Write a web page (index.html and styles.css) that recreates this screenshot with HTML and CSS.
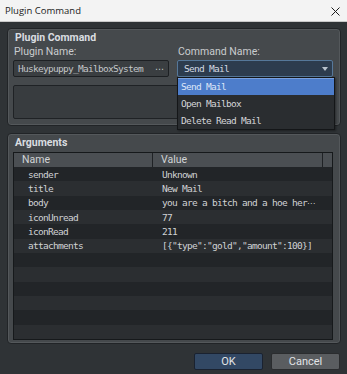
FILE: index.html
```html
<!DOCTYPE html>
<html>
<head>
  <title>Plugin Command</title>
  <link rel="stylesheet" href="styles.css">
</head>
<body>
  <div class="titlebar">
    <span class="title">Plugin Command</span>
    <svg class="close" width="9" height="9" viewBox="0 0 9 9">
      <path d="M0.5 0.5L8.5 8.5M8.5 0.5L0.5 8.5" stroke="#1b1b1b" stroke-width="1"/>
    </svg>
  </div>

  <div class="dialog">
    <div class="group command-group">
      <div class="group-title">Plugin Command</div>
      <div class="fields">
        <div class="field">
          <div class="label">Plugin Name:</div>
          <div class="input">
            <span class="mono">Huskeypuppy_MailboxSystem</span>
            <span class="more">⋯</span>
          </div>
        </div>
        <div class="field command-field">
          <div class="label">Command Name:</div>
          <div class="select">
            <span class="mono">Send Mail</span>
            <svg class="arrow" width="6" height="4" viewBox="0 0 6 4">
              <path d="M0 0H6L3 4Z" fill="#b9c2cc"/>
            </svg>
          </div>
          <ul class="dropdown mono">
            <li class="selected">Send Mail</li>
            <li>Open Mailbox</li>
            <li>Delete Read Mail</li>
          </ul>
        </div>
      </div>
      <div class="desc"></div>
    </div>

    <div class="group args-group">
      <div class="group-title">Arguments</div>
      <div class="table">
        <div class="thead">
          <div class="th name-col">Name</div>
          <div class="th value-col">Value</div>
          <div class="th filler"></div>
        </div>
        <div class="row"><span class="cell name">sender</span><span class="cell value">Unknown</span></div>
        <div class="row"><span class="cell name">title</span><span class="cell value">New Mail</span></div>
        <div class="row"><span class="cell name">body</span><span class="cell value">you are a bitch and a hoe her<span class="dots">⋯</span></span></div>
        <div class="row"><span class="cell name">iconUnread</span><span class="cell value">77</span></div>
        <div class="row"><span class="cell name">iconRead</span><span class="cell value">211</span></div>
        <div class="row"><span class="cell name">attachments</span><span class="cell value">[{"type":"gold","amount":100}]</span></div>
        <div class="row"></div>
        <div class="row"></div>
        <div class="row"></div>
        <div class="row"></div>
        <div class="row"></div>
        <div class="row"></div>
      </div>
    </div>

    <div class="buttons">
      <button class="btn ok">OK</button>
      <button class="btn cancel">Cancel</button>
    </div>
  </div>
</body>
</html>
```

FILE: styles.css
```css
body {
  margin: 0;
  width: 347px;
  height: 374px;
  overflow: hidden;
  background-color: #2f3336;
  font-family: Roboto, "Liberation Sans", sans-serif;
}

.mono {
  font-family: "DejaVu Sans Mono", "Liberation Mono", monospace;
  font-size: 9.5px;
  letter-spacing: -0.72px;
}

/* window title bar */
.titlebar {
  box-sizing: border-box;
  height: 22px;
  display: flex;
  align-items: center;
  justify-content: space-between;
  padding: 0 7px 0 5px;
  background-color: #f3f3f3;
  border-bottom: 1px solid #c9c9c9;
}

.title {
  font-family: "Open Sans", Roboto, sans-serif;
  font-size: 9.5px;
  color: #1b1b1b;
}

.close {
  display: block;
  margin-top: 1px;
}

.dialog {
  padding: 6px 6px 0 7px;
}

/* group boxes */
.group {
  background-color: #45494c;
  border: 1px solid #212427;
  border-radius: 4px;
  box-shadow: inset 0 0 0 1px #54585b;
  padding: 2px 7px 6px 5px;
}

.group-title {
  height: 14px;
  line-height: 14px;
  font-size: 10.5px;
  font-weight: bold;
  color: #dadde0;
  padding-left: 2px;
}

.fields {
  display: flex;
  gap: 8px;
}

.field {
  width: 156px;
}

.command-field {
  position: relative;
}

.label {
  height: 14px;
  line-height: 14px;
  font-size: 10.5px;
  color: #c9ccce;
  padding-left: 1px;
}

.input,
.select {
  box-sizing: border-box;
  height: 17px;
  margin-top: 1px;
  display: flex;
  align-items: center;
  justify-content: space-between;
  border-radius: 2px;
}

.input {
  background-color: #3a3e41;
  border: 1px solid #1d2023;
  padding: 0 4px 0 4px;
  color: #c3c6c8;
}

.more {
  font-family: "DejaVu Sans", sans-serif;
  font-size: 9px;
  color: #c3c6c8;
}

.select {
  background-color: #2d3c4e;
  border: 1px solid #56789a;
  padding: 0 4px 0 6px;
  color: #d3dae2;
}

.arrow {
  display: block;
}

.dropdown {
  position: absolute;
  top: 32px;
  left: 0;
  width: 158px;
  box-sizing: border-box;
  margin: 0;
  padding: 0;
  list-style: none;
  background-color: #2a2d30;
  border: 1px solid #141618;
  box-shadow: 1px 1px 2px rgba(0, 0, 0, 0.4);
  color: #d4d6d8;
  z-index: 2;
}

.dropdown li {
  height: 17px;
  line-height: 17px;
  padding-left: 3px;
}

.dropdown .selected {
  background-color: #4d7dcb;
  border-top: 1px solid #7aa0de;
  box-sizing: border-box;
  line-height: 15px;
  color: #dce6f8;
}

.desc {
  box-sizing: border-box;
  height: 34px;
  margin-top: 8px;
  background-color: #383c3f;
  border: 1px solid #1f2225;
  border-radius: 2px;
}

/* arguments */
.args-group {
  margin-top: 7px;
  padding-bottom: 3px;
}

.table {
  margin-top: 2px;
  border: 1px solid #16191b;
  background-color: #222528;
}

.thead {
  display: flex;
  height: 14px;
  background-color: #4b4f53;
}

.th {
  box-sizing: border-box;
  line-height: 14px;
  font-size: 10.5px;
  color: #d1d4d6;
  border-right: 1px solid #1f2225;
}

.name-col {
  width: 139px;
  padding-left: 8px;
}

.value-col {
  width: 170px;
  padding-left: 8px;
}

.filler {
  flex: 1;
  border-right: none;
}

.row {
  display: flex;
  height: 14.33px;
  align-items: center;
  font-family: "DejaVu Sans Mono", "Liberation Mono", monospace;
  font-size: 9.5px;
  letter-spacing: -0.72px;
  color: #d0d2d4;
}

.row:nth-of-type(odd) {
  background-color: #2b2e31;
}

.cell.name {
  width: 148px;
  padding-left: 14px;
  box-sizing: border-box;
}

.dots {
  font-family: "DejaVu Sans", sans-serif;
  letter-spacing: 0;
  font-size: 8px;
}

/* buttons */
.buttons {
  display: flex;
  justify-content: flex-end;
  gap: 8px;
  margin-top: 9px;
  padding-right: 1px;
}

.btn {
  box-sizing: border-box;
  width: 69px;
  height: 17px;
  padding: 0;
  border-radius: 2px;
  font-family: Roboto, "Liberation Sans", sans-serif;
  font-size: 11px;
  color: #e2e4e6;
}

.ok {
  background-color: #324864;
  border: 1px solid #1a2230;
}

.cancel {
  background-color: #5a5d60;
  border: 1px solid #2a2c2e;
}
```
